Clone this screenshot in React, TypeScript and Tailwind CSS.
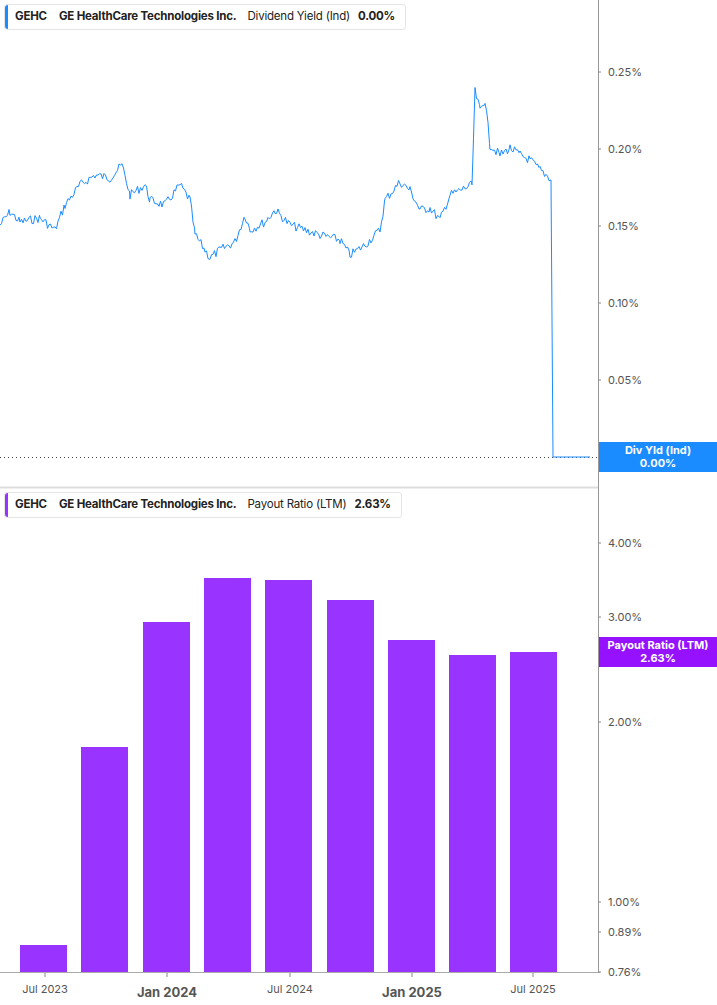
import React from "react";

const pts: [number, number][] = [[0,225],[10,212],[20,222],[40,218],[55,230],[65,205],[80,185],[95,175],[110,178],[122,165],[130,195],[145,185],[150,200],[165,205],[180,185],[190,200],[195,235],[205,250],[210,258],[220,250],[235,242],[245,215],[250,230],[265,222],[275,210],[290,225],[305,230],[320,235],[340,240],[350,255],[365,245],[380,230],[385,200],[400,182],[410,190],[420,210],[430,208],[440,220],[450,195],[465,188],[472,185],[475,92],[480,110],[485,100],[490,145],[500,155],[510,148],[520,155],[530,160],[540,170],[550,178]];

function buildLine() {
  let seed = 7;
  const rnd = () => { seed = (seed * 9301 + 49297) % 233280; return seed / 233280; };
  const out: string[] = [];
  for (let i = 0; i < pts.length - 1; i++) {
    const [x0, y0] = pts[i]; const [x1, y1] = pts[i + 1];
    for (let x = x0; x < x1; x += 1.5) {
      const t = (x - x0) / (x1 - x0);
      out.push(`${x.toFixed(1)},${(y0 + (y1 - y0) * t + (rnd() - 0.5) * 9).toFixed(1)}`);
    }
  }
  out.push("551,180", "553,457", "590,457");
  return out.join(" ");
}
const line = buildLine();

const font = { fontFamily: "Inter, 'Liberation Sans', sans-serif" };

const bars = [[20,945],[81,747],[143,622],[204,578],[265,580],[327,600],[388,640],[449,655],[510,652]];

function Tick({ y, label }: { y: number; label: string }) {
  return (
    <>
      <line x1={598} x2={601} y1={y} y2={y} stroke="#888" />
      <text x={608} y={y + 4} fontSize={11} fill="#555">{label}</text>
    </>
  );
}

function Legend({ color, metric, value }: { color: string; metric: string; value: string }) {
  return (
    <div className="absolute left-[4px] top-[4px] flex items-center h-[26px] whitespace-nowrap bg-white border border-[#e5e5e5] rounded-[3px] pr-[10px] text-[11.5px] tracking-[-0.2px] text-[#222]">
      <div className="w-[3px] h-full rounded-l-[3px]" style={{ background: color }} />
      <span className="font-bold ml-[7px]">GEHC</span>
      <span className="font-bold ml-[12px]">GE HealthCare Technologies Inc.</span>
      <span className="ml-[11px]">{metric}</span>
      <span className="font-bold ml-[8px]">{value}</span>
    </div>
  );
}

export default function App() {
  return (
    <div className="relative w-[717px] h-[1005px] bg-white overflow-hidden" style={font}>
      <svg width={717} height={1005} className="block">
        <line x1={598.5} x2={598.5} y1={0} y2={972} stroke="#999" />
        <line x1={0} x2={598} y1={487.5} y2={487.5} stroke="#ddd" strokeWidth={2} />
        <line x1={0} x2={598} y1={457.5} y2={457.5} stroke="#444" strokeDasharray="1 3" />
        <polyline points={line} fill="none" stroke="#1a8cff" strokeWidth={1} />
        <Tick y={72} label="0.25%" />
        <Tick y={149} label="0.20%" />
        <Tick y={226} label="0.15%" />
        <Tick y={303} label="0.10%" />
        <Tick y={380} label="0.05%" />
        {bars.map(([x, y], i) => (
          <rect key={i} x={x} y={y} width={47} height={972 - y} fill="#9933ff" />
        ))}
        <line x1={0} x2={600} y1={972.5} y2={972.5} stroke="#aaa" />
        <Tick y={543} label="4.00%" />
        <Tick y={617} label="3.00%" />
        <Tick y={722} label="2.00%" />
        <Tick y={902} label="1.00%" />
        <Tick y={932} label="0.89%" />
        <Tick y={972} label="0.76%" />
        {[[45,"Jul 2023",false],[167,"Jan 2024",true],[290,"Jul 2024",false],[412,"Jan 2025",true],[533,"Jul 2025",false]].map(([x, l, b]) => (
          <g key={l as string}>
            <line x1={x as number} x2={x as number} y1={973} y2={977} stroke="#888" />
            <text x={x as number} y={b ? 997 : 993} textAnchor="middle" fontSize={b ? 13 : 11} fontWeight={b ? 700 : 400} fill="#555">{l as string}</text>
          </g>
        ))}
      </svg>
      <Legend color="#1a8cff" metric="Dividend Yield (Ind)" value="0.00%" />
      <div className="absolute left-0 top-[488px]">
        <div className="relative">
          <Legend color="#9933ff" metric="Payout Ratio (LTM)" value="2.63%" />
        </div>
      </div>
      <div className="absolute left-[599px] top-[442px] w-[118px] h-[30px] bg-[#1a8cff] text-white text-[11px] font-bold leading-[13px] flex flex-col items-center justify-center">
        <span>Div Yld (Ind)</span><span>0.00%</span>
      </div>
      <div className="absolute left-[599px] top-[637px] w-[118px] h-[30px] bg-[#9612ff] text-white text-[11px] font-bold leading-[13px] flex flex-col items-center justify-center">
        <span>Payout Ratio (LTM)</span><span>2.63%</span>
      </div>
    </div>
  );
}
